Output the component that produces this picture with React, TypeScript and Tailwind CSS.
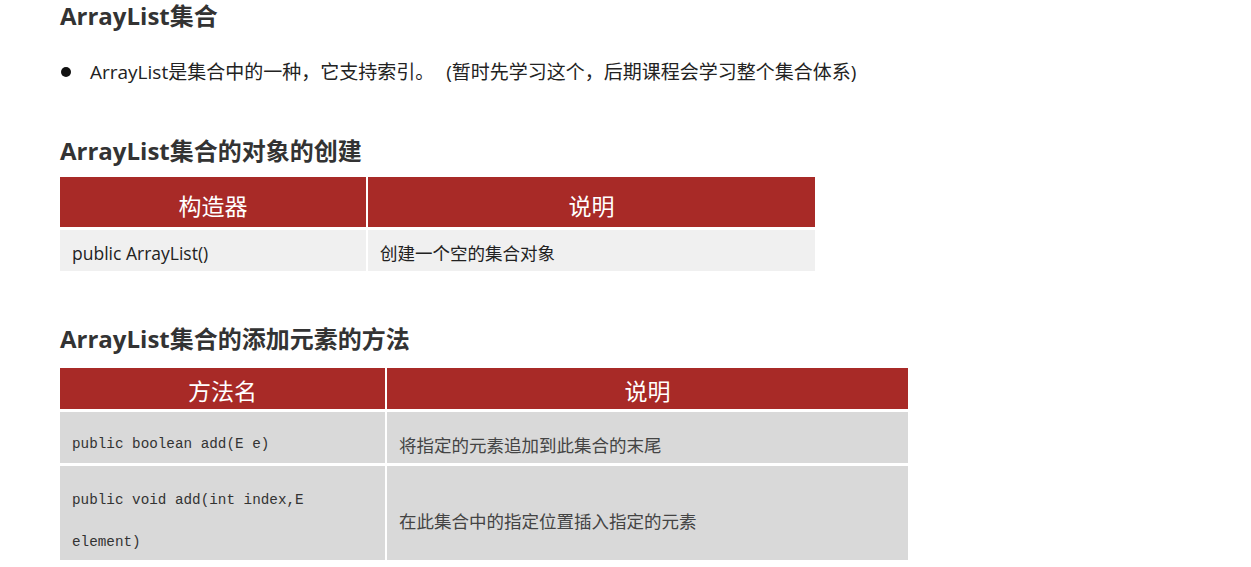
import React from 'react';

const App: React.FC = () => {
    return (
        <div className="min-h-[567px] w-[1251px] bg-white pl-[60px] text-[#333] [font-family:'Open_Sans','Noto_Sans_CJK_SC',sans-serif]">
            {/* Title */}
            <h1 className="text-[24px] font-bold leading-[32px] text-[#333]">ArrayList集合</h1>

            {/* Bullet */}
            <div className="mt-[24px] flex items-center text-[19px] leading-[32px] text-[#222]">
                <span className="ml-[1px] h-[10px] w-[10px] rounded-full bg-[#111]" />
                <span className="ml-[19px]">ArrayList是集合中的一种，它支持索引。</span>
                <span className="ml-[12px]">(暂时先学习这个，后期课程会学习整个集合体系)</span>
            </div>

            {/* Constructor table */}
            <h2 className="mt-[47px] text-[24px] font-bold leading-[32px] text-[#333]">ArrayList集合的对象的创建</h2>
            <div className="mt-[10px] grid w-[755px] grid-cols-[306px_447px] gap-x-[2px] gap-y-[3px]">
                <div className="flex h-[50px] items-center justify-center bg-[#a82a27] pt-[9px] text-[23px] text-white">构造器</div>
                <div className="flex h-[50px] items-center justify-center bg-[#a82a27] pt-[9px] text-[23px] text-white">说明</div>
                <div className="flex h-[41px] items-center bg-[#f0f0f0] pl-[12px] pt-[6px] text-[17.5px] text-[#222]">public ArrayList()</div>
                <div className="flex h-[41px] items-center bg-[#f0f0f0] pl-[12px] pt-[6px] text-[17.5px] text-[#222]">创建一个空的集合对象</div>
            </div>

            {/* Add methods table */}
            <h2 className="mt-[52px] text-[24px] font-bold leading-[32px] text-[#333]">ArrayList集合的添加元素的方法</h2>
            <div className="mt-[13px] grid w-[848px] grid-cols-[325px_521px] gap-x-[2px] gap-y-[3px]">
                <div className="flex h-[41px] items-center justify-center bg-[#a82a27] pt-[5px] text-[23px] text-white">方法名</div>
                <div className="flex h-[41px] items-center justify-center bg-[#a82a27] pt-[5px] text-[23px] text-white">说明</div>
                <div className="flex h-[51px] items-center bg-[#d9d9d9] pl-[12px] pt-[15px] text-[14.3px] text-[#333] [font-family:'Liberation_Mono','Noto_Sans_CJK_SC',monospace]">public boolean add(E e)</div>
                <div className="flex h-[51px] items-center bg-[#d9d9d9] pl-[12px] pt-[15px] text-[17.5px] text-[#444]">将指定的元素追加到此集合的末尾</div>
                <div className="flex h-[94px] items-center bg-[#d9d9d9] pl-[12px] pt-[16px] text-[14.3px] leading-[42px] text-[#333] [font-family:'Liberation_Mono','Noto_Sans_CJK_SC',monospace]">
                    <div>
                        public void add(int index,E
                        <br />
                        element)
                    </div>
                </div>
                <div className="flex h-[94px] items-center bg-[#d9d9d9] pl-[12px] pt-[16px] text-[17.5px] text-[#444]">在此集合中的指定位置插入指定的元素</div>
            </div>
        </div>
    );
};

export default App;
